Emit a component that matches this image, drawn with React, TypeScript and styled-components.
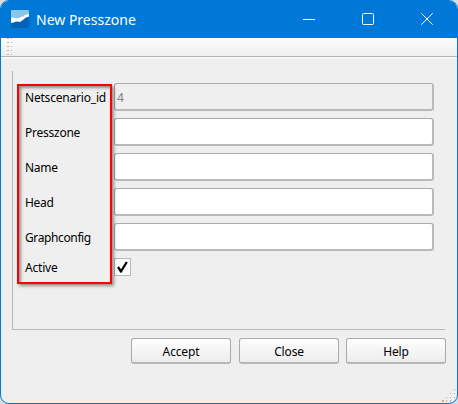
import React from "react";
import styled, { createGlobalStyle } from "styled-components";

const GlobalStyle = createGlobalStyle`
  * { box-sizing: border-box; }
  body { margin: 0; background: #d9dcdd; overflow: hidden; }
  button, input { font: inherit; }
`;

const Window = styled.main`
  position: relative;
  width: 458px;
  height: 404px;
  display: flex;
  flex-direction: column;
  overflow: hidden;
  border: 1px solid #0078d7;
  border-radius: 9px;
  background: #efefef;
  color: #000;
  font: 12px/16px "Noto Sans", "Open Sans", sans-serif;
`;

const TitleBar = styled.header`
  flex: 0 0 37px;
  display: flex;
  align-items: center;
  padding: 0 0 1px 9px;
  background: #0078d7;
  color: #fff;
`;

const Logo = styled.svg`
  flex: none;
`;

const Title = styled.h1`
  flex: 1;
  margin: 1px 0 0 6px;
  font-size: 14px;
  line-height: 20px;
  font-weight: 400;
  letter-spacing: 0;
`;

const WindowControl = styled.button`
  width: 59px;
  height: 36px;
  padding: 0 1px 0 0;
  border: 0;
  display: flex;
  align-items: center;
  justify-content: center;
  background: transparent;
`;

const Toolbar = styled.div`
  flex: 0 0 21px;
  padding-left: 6px;
  border-bottom: 2px solid #f7f7f7;
  background: linear-gradient(#fcfcfc, #efefef 18px, #b4b4b4 18px);
`;

const ToolbarGrip = styled.svg`
  display: block;
`;

const Panel = styled.section`
  flex: 0 0 259px;
  width: 433px;
  margin: 12px 0 0 11px;
  padding: 12px 12px 0;
  border: solid #b8b8b8;
  border-width: 0 0 1px 1px;
`;

const Form = styled.form`
  position: relative;
  display: flex;
  flex-direction: column;
  gap: 7px;
`;

const Row = styled.div<{ $compact?: boolean }>`
  display: grid;
  grid-template-columns: 89px 320px;
  align-items: center;
  height: ${({ $compact }) => ($compact ? 18 : 28)}px;
`;

const Label = styled.label<{ $spacing: number }>`
  padding-top: 2px;
  white-space: nowrap;
  letter-spacing: ${({ $spacing }) => $spacing}px;
`;

const Field = styled.input`
  width: 320px;
  height: 28px;
  padding: 2px 2px 0;
  border: 1px solid #aaa;
  border-right: 2px solid #bababa;
  border-bottom: 2px solid #bababa;
  border-radius: 3px;
  background: #fff;
  color: #000;
  &:disabled { background: #efefef; color: #808080; }
`;

const Checkbox = styled.span`
  width: 17px;
  height: 18px;
  display: flex;
  align-items: center;
  justify-content: center;
  border: 1px solid #b8b8b8;
  background: #fcfcfc;
`;

const Highlight = styled.div`
  position: absolute;
  left: -8px;
  top: 1px;
  width: 95px;
  height: 200px;
  border: 2px solid #f00;
  box-shadow: 2px 2px 3px #0006, inset 2px 2px 3px #0006;
  pointer-events: none;
`;

const Actions = styled.footer`
  display: grid;
  grid-template-columns: 108px 107px 100px;
  justify-content: end;
  padding: 8px 11px 0 0;
`;

const ActionButton = styled.button`
  width: 100px;
  height: 26px;
  padding: 2px 0 0;
  border: 1px solid #aaa;
  border-bottom: 2px solid #b6b6b6;
  border-radius: 3px;
  background: linear-gradient(#fefefe, #ededed);
  color: #000;
  letter-spacing: -0.15px;
`;

const SizeGrip = styled.svg`
  position: absolute;
  right: 0;
  bottom: 0;
`;

const fields = [
  { id: "scenario", label: "Netscenario_id", value: "4", spacing: -0.2, disabled: true },
  { id: "presszone", label: "Presszone", value: "", spacing: -0.25 },
  { id: "name", label: "Name", value: "", spacing: -0.3 },
  { id: "head", label: "Head", value: "", spacing: -0.3 },
  { id: "config", label: "Graphconfig", value: "", spacing: -0.38 },
];

export default function App() {
  return (
    <>
      <GlobalStyle />
      <Window>
        <TitleBar>
          <Logo width="20" height="20" viewBox="0 0 20 20">
            <rect x="1" y="1" width="18" height="18" rx="1" fill="#0063b8" />
            <path d="M1 2Q1 1 2 1H18Q19 1 19 2V6H1Z" fill="#8bc5e8" />
            <path d="M1 5H19V6L12 9L1 10Z" fill="#8bc5e8" />
            <path d="M1 9Q3 8 5 9Q8 10 11 8Q14 8 15 6L19 5V7.5Q15 8 13 11L10 13Q6 12 4 13.5L1 14Z" fill="#fff" />
          </Logo>
          <Title>New Presszone</Title>
          <WindowControl aria-label="Minimize">
            <svg width="12" height="12"><path d="M0 6.5H12" stroke="#fff" /></svg>
          </WindowControl>
          <WindowControl aria-label="Maximize">
            <svg width="12" height="12"><rect x=".5" y=".5" width="11" height="11" rx="1" fill="none" stroke="#fff" /></svg>
          </WindowControl>
          <WindowControl aria-label="Close">
            <svg width="12" height="12"><path d="M.3.3 11.7 11.7M11.7.3.3 11.7" stroke="#fff" /></svg>
          </WindowControl>
        </TitleBar>
        <Toolbar>
          <ToolbarGrip width="6" height="19" shapeRendering="crispEdges">
            <path d="M1 0V19M4.5 0V19" stroke="#b7b7b7" strokeWidth="1.5" strokeDasharray="1 3" />
          </ToolbarGrip>
        </Toolbar>
        <Panel>
          <Form>
            {fields.map((field) => (
              <Row key={field.id}>
                <Label htmlFor={field.id} $spacing={field.spacing}>{field.label}</Label>
                <Field id={field.id} defaultValue={field.value} disabled={field.disabled} />
              </Row>
            ))}
            <Row $compact>
              <Label $spacing={-0.2}>Active</Label>
              <Checkbox role="checkbox" aria-checked="true" aria-label="Active">
                <svg width="13" height="14"><path d="M2 7 5 11.5 10.8 2" fill="none" stroke="#000" strokeWidth="2.3" strokeLinejoin="round" /></svg>
              </Checkbox>
            </Row>
            <Highlight />
          </Form>
        </Panel>
        <Actions>
          <ActionButton>Accept</ActionButton>
          <ActionButton>Close</ActionButton>
          <ActionButton>Help</ActionButton>
        </Actions>
        <SizeGrip width="16" height="16" shapeRendering="crispEdges">
          <path d="M13 2h1v1h-1zM9 6h1v1H9zM13 6h1v1h-1zM5 10h1v1H5zM9 10h1v1H9zM13 10h1v1h-1zM1 13h2v2H1zM5 13h1v2H5zM9 13h1v2H9z" fill="#b4b4b4" />
        </SizeGrip>
      </Window>
    </>
  );
}
